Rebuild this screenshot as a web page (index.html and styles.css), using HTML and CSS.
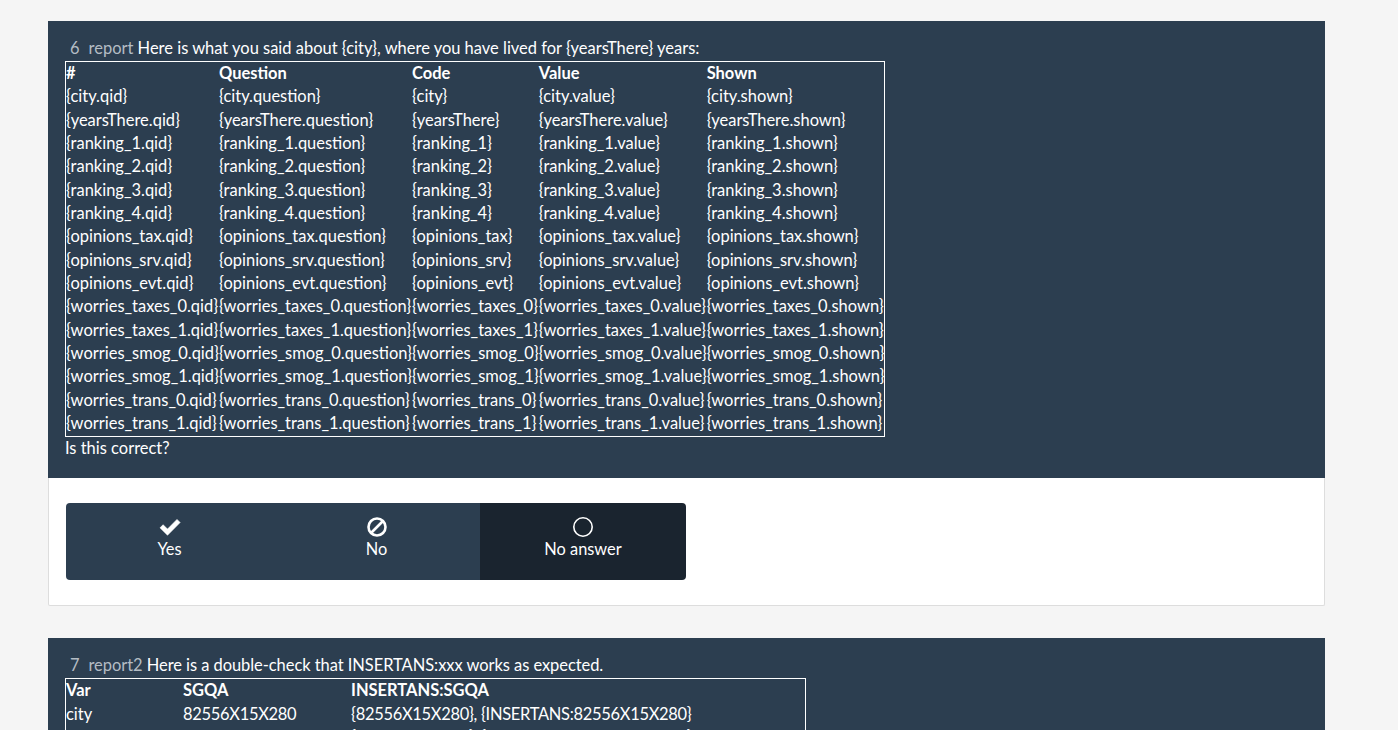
FILE: index.html
```html
<!DOCTYPE html>
<html lang="en">
<head>
<meta charset="utf-8">
<title>Survey</title>
<link rel="stylesheet" href="styles.css">
</head>
<body>
<main class="page">
  <section class="card">
    <header class="head">
      <div class="title"><span class="num">6</span><span class="code">report</span> Here is what you said about {city}, where you have lived for {yearsThere} years:</div>
      <table class="grid">
        <tr><th>#</th><th>Question</th><th>Code</th><th>Value</th><th>Shown</th></tr>
        <tr><td>{city.qid}</td><td>{city.question}</td><td>{city}</td><td>{city.value}</td><td>{city.shown}</td></tr>
        <tr><td>{yearsThere.qid}</td><td>{yearsThere.question}</td><td>{yearsThere}</td><td>{yearsThere.value}</td><td>{yearsThere.shown}</td></tr>
        <tr><td>{ranking_1.qid}</td><td>{ranking_1.question}</td><td>{ranking_1}</td><td>{ranking_1.value}</td><td>{ranking_1.shown}</td></tr>
        <tr><td>{ranking_2.qid}</td><td>{ranking_2.question}</td><td>{ranking_2}</td><td>{ranking_2.value}</td><td>{ranking_2.shown}</td></tr>
        <tr><td>{ranking_3.qid}</td><td>{ranking_3.question}</td><td>{ranking_3}</td><td>{ranking_3.value}</td><td>{ranking_3.shown}</td></tr>
        <tr><td>{ranking_4.qid}</td><td>{ranking_4.question}</td><td>{ranking_4}</td><td>{ranking_4.value}</td><td>{ranking_4.shown}</td></tr>
        <tr><td>{opinions_tax.qid}</td><td>{opinions_tax.question}</td><td>{opinions_tax}</td><td>{opinions_tax.value}</td><td>{opinions_tax.shown}</td></tr>
        <tr><td>{opinions_srv.qid}</td><td>{opinions_srv.question}</td><td>{opinions_srv}</td><td>{opinions_srv.value}</td><td>{opinions_srv.shown}</td></tr>
        <tr><td>{opinions_evt.qid}</td><td>{opinions_evt.question}</td><td>{opinions_evt}</td><td>{opinions_evt.value}</td><td>{opinions_evt.shown}</td></tr>
        <tr><td>{worries_taxes_0.qid}</td><td>{worries_taxes_0.question}</td><td>{worries_taxes_0}</td><td>{worries_taxes_0.value}</td><td>{worries_taxes_0.shown}</td></tr>
        <tr><td>{worries_taxes_1.qid}</td><td>{worries_taxes_1.question}</td><td>{worries_taxes_1}</td><td>{worries_taxes_1.value}</td><td>{worries_taxes_1.shown}</td></tr>
        <tr><td>{worries_smog_0.qid}</td><td>{worries_smog_0.question}</td><td>{worries_smog_0}</td><td>{worries_smog_0.value}</td><td>{worries_smog_0.shown}</td></tr>
        <tr><td>{worries_smog_1.qid}</td><td>{worries_smog_1.question}</td><td>{worries_smog_1}</td><td>{worries_smog_1.value}</td><td>{worries_smog_1.shown}</td></tr>
        <tr><td>{worries_trans_0.qid}</td><td>{worries_trans_0.question}</td><td>{worries_trans_0}</td><td>{worries_trans_0.value}</td><td>{worries_trans_0.shown}</td></tr>
        <tr class="last"><td>{worries_trans_1.qid}</td><td>{worries_trans_1.question}</td><td>{worries_trans_1}</td><td>{worries_trans_1.value}</td><td>{worries_trans_1.shown}</td></tr>
      </table>
      <div class="after">Is this correct?</div>
    </header>
    <div class="answers">
      <div class="btn-group">
        <button class="btn" type="button">
          <svg class="icon" viewBox="0 0 22 22"><path d="M1 11.800 4.100 8.700 8.500 13.100 18 3.400 21.100 6.500 8.500 19.200z" fill="#fff" stroke="#fff" stroke-width=".6" stroke-linejoin="round"/></svg>
          <span>Yes</span>
        </button>
        <button class="btn" type="button">
          <svg class="icon" viewBox="0 0 22 22"><circle cx="11" cy="11" r="8.500" fill="none" stroke="#fff" stroke-width="2.600"/><path d="M5 17 17 5" stroke="#fff" stroke-width="2.600"/></svg>
          <span>No</span>
        </button>
        <button class="btn active" type="button">
          <svg class="icon" viewBox="0 0 22 22"><circle cx="11" cy="11" r="9.200" fill="none" stroke="#fff" stroke-width="1.600"/></svg>
          <span>No answer</span>
        </button>
      </div>
    </div>
  </section>
  <section class="card">
    <header class="head">
      <div class="title tight"><span class="num">7</span><span class="code">report2</span> Here is a double-check that INSERTANS:xxx works as expected.</div>
      <table class="grid grid-fixed">
        <tr><th class="col-var">Var</th><th class="col-sgqa">SGQA</th><th>INSERTANS:SGQA</th></tr>
        <tr><td>city</td><td class="digits">82556X15X280</td><td class="digits">{82556X15X280}, {INSERTANS:82556X15X280}</td></tr>
        <tr><td>yearsThere</td><td class="digits">82556X15X281</td><td class="digits">{82556X15X281}, {INSERTANS:82556X15X281}</td></tr>
      </table>
    </header>
  </section>
</main>
</body>
</html>
```

FILE: styles.css
```css
* { box-sizing: border-box; }
html, body { margin: 0; height: 730px; overflow: hidden; }
body {
  background: #f5f5f5;
  color: #fff;
  font-family: Lato, "Liberation Sans", sans-serif;
  font-size: 16.48px;
  line-height: 23.33px;
}
.page {
  width: 1277px;
  margin-left: 48px;
  padding-top: 21px;
  display: flex;
  flex-direction: column;
  gap: 32px;
}
.card {
  background: #fff;
  border: 1px solid #ddd;
  border-top: 0;
  border-radius: 2px;
}
.head {
  background: #2c3e50;
  margin: 0 -1px;
  padding: 16px 16px 18px 17px;
}
.title { padding-left: 5px; height: 24px; }
.tight { letter-spacing: -0.05px; }
.num { color: #b4bcc4; margin-right: 9px; }
.code { color: #b4bcc4; }
.grid {
  border: 1px solid #fff;
  border-collapse: separate;
  border-spacing: 0;
  color: #fff;
  line-height: 23.33px;
}
.grid th, .grid td {
  padding: 0;
  text-align: left;
  white-space: nowrap;
}
.grid th { font-weight: 700; }
.grid .last td { padding-bottom: 1px; }
.grid .digits { letter-spacing: -0.3px; }
.grid-fixed { table-layout: fixed; width: 741px; }
.col-var { width: 117px; }
.col-sgqa { width: 168px; }
.after { height: 23px; }
.answers { padding: 25px 17px; }
.btn-group {
  width: 620px;
  height: 77px;
  display: flex;
  border-radius: 4px;
  overflow: hidden;
}
.btn {
  width: 207px;
  flex: none;
  border: 0;
  padding: 13px 0 0;
  background: #2c3e50;
  color: #fff;
  font: inherit;
  font-size: 16.38px;
  display: flex;
  flex-direction: column;
  align-items: center;
  line-height: 21px;
}
.btn.active { width: 206px; background: #1a242f; }
.icon { width: 22px; height: 22px; display: block; }
```
